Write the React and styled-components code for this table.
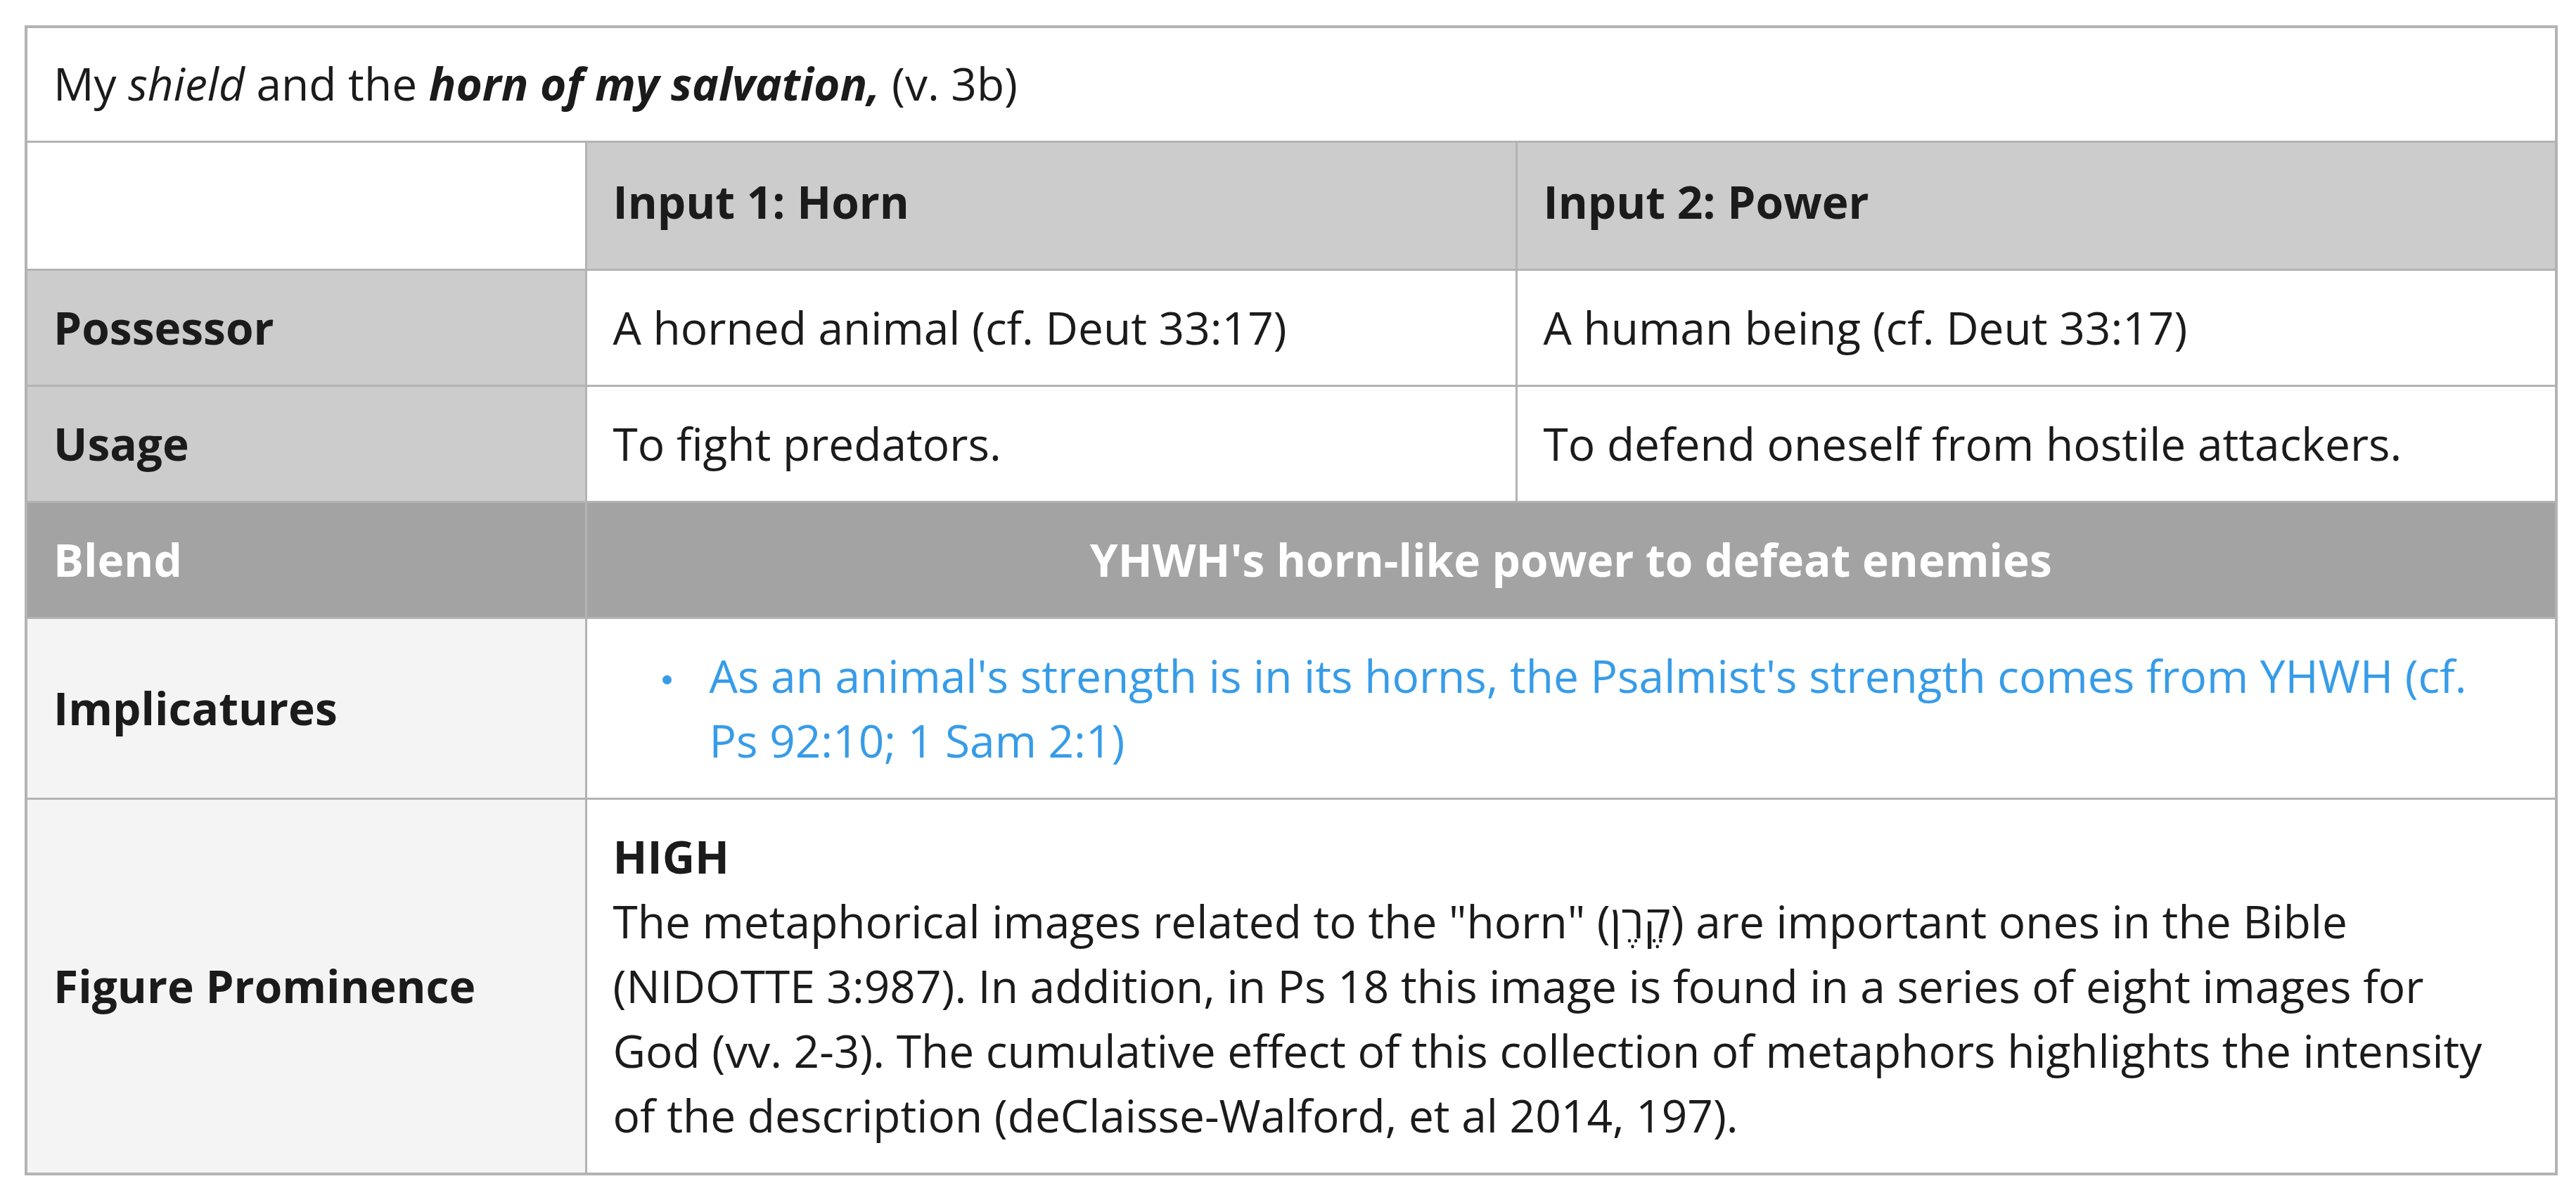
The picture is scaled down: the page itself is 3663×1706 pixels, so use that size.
import React from "react";
import styled, { createGlobalStyle, css } from "styled-components";

const GlobalStyle = createGlobalStyle`
  html, body { margin: 0; padding: 0; background: #ffffff; }
  body {
    font-family: "Open Sans", "Noto Sans", "DejaVu Sans", sans-serif;
    color: #1b1b1b;
  }
`;

const Page = styled.main`
  padding: 36px 26px 36px 35px;
`;

const Table = styled.table`
  width: 100%;
  border-collapse: collapse;
  table-layout: fixed;
  border: 4px solid #b3b3b3;
  font-size: 64px;
  line-height: 92px;
`;

const Cell = styled.td`
  border: 3px solid #b3b3b3;
  padding: 35px 37px;
  vertical-align: middle;
  text-align: left;
  background: #ffffff;
`;

const CaptionCell = styled(Cell)`
  padding: 33px 37px 35px;
`;

const HeadCell = styled.th`
  border: 3px solid #b3b3b3;
  padding: 38px 37px 49px;
  text-align: left;
  font-weight: 700;
  background: ${(p) => (p.$blank ? "#ffffff" : "#cccccc")};
`;

const tones = {
  mid: css`
    background: #cccccc;
    color: #1b1b1b;
  `,
  dark: css`
    background: #a3a3a3;
    color: #ffffff;
  `,
  light: css`
    background: #f4f4f4;
    color: #1b1b1b;
  `,
};

const LabelCell = styled(Cell).attrs({ as: "th", scope: "row" })`
  font-weight: 700;
  ${(p) => tones[p.$tone]}
`;

const BlendCell = styled(Cell)`
  background: #a3a3a3;
  color: #ffffff;
  font-weight: 700;
  text-align: center;
`;

const BulletList = styled.ul`
  list-style: none;
  margin: 0;
  padding: 0 12px 0 0;
  color: #379ce8;
`;

const BulletItem = styled.li`
  display: flex;
  align-items: flex-start;
`;

const Bullet = styled.span`
  flex: none;
  width: 13px;
  height: 13px;
  border-radius: 50%;
  background: #379ce8;
  margin: 45px 54px 0 70px;
`;

const Level = styled.strong`
  display: block;
  font-weight: 700;
`;

const Paragraph = styled.p`
  margin: 0;
  padding-right: 36px;
`;

export default function App() {
  return (
    <>
      <GlobalStyle />
      <Page>
        <Table>
          <colgroup>
            <col style={{ width: "796px" }} />
            <col style={{ width: "1323px" }} />
            <col />
          </colgroup>
          <tbody>
            <tr>
              <CaptionCell colSpan={3}>
                My <em>shield</em> and the{" "}
                <strong>
                  <em>horn of my salvation,</em>
                </strong>{" "}
                (v. 3b)
              </CaptionCell>
            </tr>
            <tr>
              <HeadCell $blank />
              <HeadCell>Input 1: Horn</HeadCell>
              <HeadCell>Input 2: Power</HeadCell>
            </tr>
            <tr>
              <LabelCell $tone="mid">Possessor</LabelCell>
              <Cell>A horned animal (cf. Deut 33:17)</Cell>
              <Cell>A human being (cf. Deut 33:17)</Cell>
            </tr>
            <tr>
              <LabelCell $tone="mid">Usage</LabelCell>
              <Cell>To fight predators.</Cell>
              <Cell>To defend oneself from hostile attackers.</Cell>
            </tr>
            <tr>
              <LabelCell $tone="dark">Blend</LabelCell>
              <BlendCell colSpan={2}>
                YHWH's horn-like power to defeat enemies
              </BlendCell>
            </tr>
            <tr>
              <LabelCell $tone="light">Implicatures</LabelCell>
              <Cell colSpan={2}>
                <BulletList>
                  <BulletItem>
                    <Bullet />
                    <span>
                      As an animal's strength is in its horns, the Psalmist's
                      strength comes from YHWH (cf. Ps 92:10; 1 Sam 2:1)
                    </span>
                  </BulletItem>
                </BulletList>
              </Cell>
            </tr>
            <tr>
              <LabelCell $tone="light">Figure Prominence</LabelCell>
              <Cell colSpan={2}>
                <Level>HIGH</Level>
                <Paragraph>
                  The metaphorical images related to the "horn" (קֶרֶן) are
                  important ones in the Bible (NIDOTTE 3:987). In addition, in
                  Ps 18 this image is found in a series of eight images for God
                  (vv. 2-3). The cumulative effect of this collection of
                  metaphors highlights the intensity of the description
                  (deClaisse-Walford, et al 2014, 197).
                </Paragraph>
              </Cell>
            </tr>
          </tbody>
        </Table>
      </Page>
    </>
  );
}
